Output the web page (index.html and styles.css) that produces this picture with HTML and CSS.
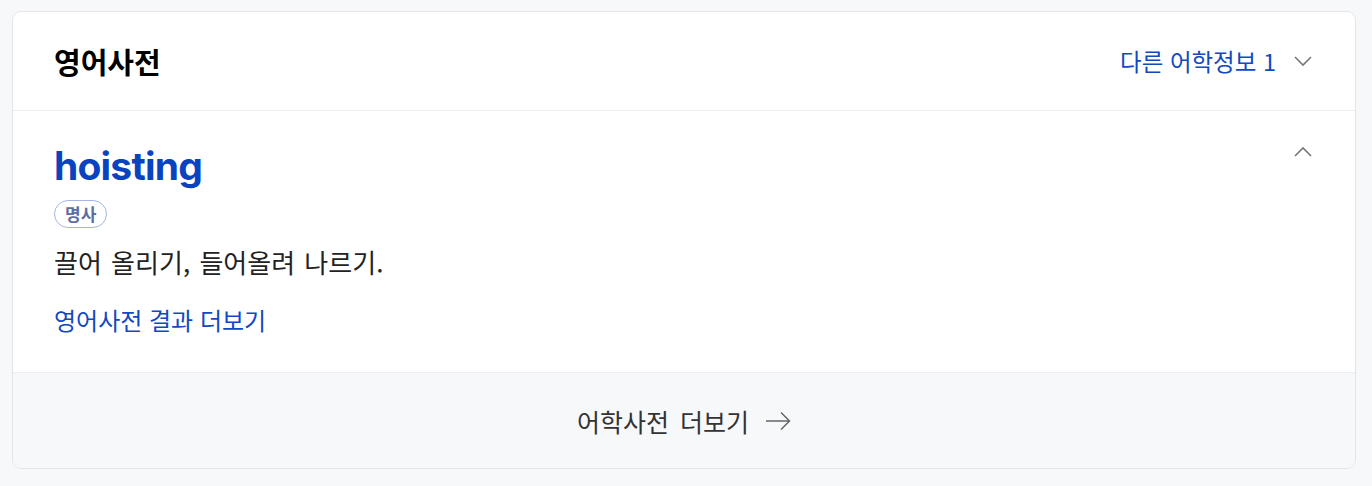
FILE: index.html
```html
<!DOCTYPE html>
<html lang="ko">
  <head>
    <meta charset="utf-8">
    <title>영어사전</title>
    <link rel="stylesheet" href="styles.css">
  </head>
  <body>
    <div class="card">
      <div class="card-head">
        <h2 class="card-title">영어사전</h2>
        <a class="other-info" href="#">
          다른 어학정보 1
          <svg class="chev" width="18" height="18" viewBox="0 0 18 18">
            <path d="M1 5l8 8 8-8" fill="none" stroke="#777" stroke-width="1.6"/>
          </svg>
        </a>
      </div>

      <div class="entry">
        <div class="entry-top">
          <a class="word" href="#">hoisting</a>
          <svg class="chev" width="18" height="18" viewBox="0 0 18 18">
            <path d="M1 13l8-8 8 8" fill="none" stroke="#777" stroke-width="1.6"/>
          </svg>
        </div>
        <div class="pos">명사</div>
        <p class="meaning">끌어 올리기, 들어올려 나르기.</p>
        <a class="more-link" href="#">영어사전 결과 더보기</a>
      </div>

      <a class="card-foot" href="#">
        어학사전 더보기
        <svg width="26" height="20" viewBox="0 0 26 20">
          <path d="M1 10h23M16 1.5l8.5 8.5-8.5 8.5" fill="none" stroke="#666" stroke-width="1.5"/>
        </svg>
      </a>
    </div>
  </body>
</html>
```

FILE: styles.css
```css
body {
  margin: 0;
  padding: 11px 16px 17px 12px;
  background-color: #f7f8fa;
  font-family: "Noto Sans CJK KR", "Noto Sans", sans-serif;
}

a {
  text-decoration: none;
}

.card {
  background-color: #fff;
  border: 1px solid #e3e5e9;
  border-radius: 9px;
  overflow: hidden;
}

.card-head {
  height: 98px;
  display: flex;
  align-items: center;
  justify-content: space-between;
  padding: 0 43px 0 41px;
  border-bottom: 1px solid #eceef1;
}

.card-title {
  margin: 0;
  font-size: 29px;
  font-weight: 700;
  color: #000;
}

.other-info {
  display: flex;
  align-items: center;
  gap: 18px;
  font-size: 23.5px;
  color: #1149c1;
}

.chev {
  display: block;
}

.entry {
  padding: 32px 43px 35px 41px;
  border-bottom: 1px solid #eceef1;
}

.entry-top {
  display: flex;
  justify-content: space-between;
  align-items: flex-start;
}

.word {
  font-family: Inter, "Noto Sans", sans-serif;
  font-size: 39px;
  font-weight: 700;
  color: #0a43c0;
  letter-spacing: -0.8px;
  line-height: 46px;
}

.pos {
  width: fit-content;
  margin-top: 11px;
  padding: 0 10px;
  height: 26px;
  line-height: 25px;
  border: 1.5px solid #a5b6e4;
  border-radius: 15px;
  font-size: 17px;
  font-weight: 700;
  color: #5b6ea6;
}

.meaning {
  margin: 16px 0 0;
  font-size: 26px;
  line-height: 36px;
  word-spacing: 2px;
  color: #222;
}

.more-link {
  display: block;
  width: fit-content;
  margin-top: 23px;
  font-size: 24px;
  line-height: 34px;
  color: #1149c1;
}

.card-foot {
  height: 95px;
  display: flex;
  align-items: center;
  justify-content: center;
  gap: 16px;
  background-color: #f7f8fa;
  font-size: 25px;
  word-spacing: 4px;
  color: #333;
}
```
